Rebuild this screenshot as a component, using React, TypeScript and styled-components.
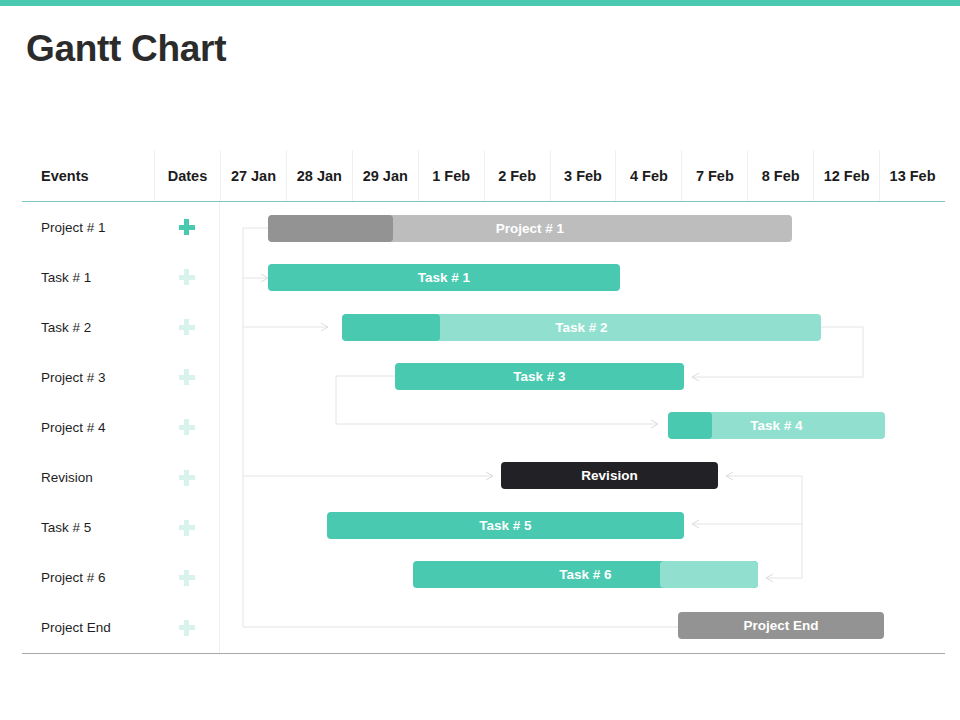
import React from "react";
import styled, { createGlobalStyle } from "styled-components";

const Global = createGlobalStyle`
  html, body { margin: 0; padding: 0; background: #fff; }
  body { font-family: "Liberation Sans", Arial, sans-serif; }
`;

const Page = styled.div`
  width: 960px; height: 720px; position: relative; overflow: hidden;
  border-top: 6px solid #48c9b0; box-sizing: border-box;
`;
const Title = styled.h1`
  margin: 0; padding: 22px 0 0 26px; font-size: 37px; font-weight: 700;
  color: #2b2b2b; line-height: 42px; letter-spacing: -0.3px;
`;
const Table = styled.div`
  margin: 80px 0 0 22px; width: 923px;
`;
const Header = styled.div`
  display: grid; grid-template-columns: 132px 66px repeat(11, 1fr);
  height: 51px; border-bottom: 1px solid #7cc5c6;
`;
const HeadCell = styled.div<{ $first?: boolean }>`
  display: flex; align-items: center; justify-content: ${p => (p.$first ? "flex-start" : "center")};
  padding-left: ${p => (p.$first ? "19px" : "0")};
  font-size: 14.5px; font-weight: 700; color: #1c1c1c;
  border-left: ${p => (p.$first ? "none" : "1px solid #f0f0f0")};
`;
const Body = styled.div`
  display: grid; grid-template-columns: 132px 66px 1fr;
  height: 451px; border-bottom: 1px solid #a8a8a8;
`;
const Col = styled.div<{ $divider?: boolean }>`
  display: grid; grid-template-rows: repeat(9, 1fr);
  border-right: ${p => (p.$divider ? "1px solid #f0f0f0" : "none")};
`;
const Label = styled.div`
  display: flex; align-items: center; padding-left: 19px; font-size: 13.5px; color: #1e1e1e;
`;
const PlusCell = styled.div`
  display: flex; align-items: center; justify-content: center;
`;
const Plus = styled.span<{ $active?: boolean }>`
  position: relative; width: 16px; height: 16px; display: block;
  &::before, &::after { content: ""; position: absolute; background: ${p => (p.$active ? "#48c9b0" : "#d8f3ed")}; }
  &::before { left: 0; right: 0; top: 5.5px; height: 5px; }
  &::after { top: 0; bottom: 0; left: 5.5px; width: 5px; }
`;
const Chart = styled.div`position: relative;`;
const Svg = styled.svg`position: absolute; inset: 0;`;
const Bar = styled.div<{ $bg: string }>`
  position: absolute; height: 27px; border-radius: 4px; overflow: hidden;
  background: ${p => p.$bg}; display: flex; align-items: center; justify-content: center;
`;
const BarFill = styled.div<{ $bg: string }>`
  position: absolute; top: 0; bottom: 0; background: ${p => p.$bg}; border-radius: 4px;
`;
const BarText = styled.span`
  position: relative; color: #fff; font-weight: 700; font-size: 13.5px;
`;

const T = "#48c9b0", TL = "#90dfcf", G = "#939393", GL = "#bdbdbd";
const OX = 220, OY = 201;
type B = { l: string; x1: number; x2: number; y: number; bg: string; fill?: [number, number, string] };
const bars: B[] = [
  { l: "Project # 1", x1: 268, x2: 792, y: 214, bg: GL, fill: [268, 393, G] },
  { l: "Task # 1", x1: 268, x2: 620, y: 263, bg: T },
  { l: "Task # 2", x1: 342, x2: 821, y: 313, bg: TL, fill: [342, 440, T] },
  { l: "Task # 3", x1: 395, x2: 684, y: 362, bg: T },
  { l: "Task # 4", x1: 668, x2: 885, y: 411, bg: TL, fill: [668, 712, T] },
  { l: "Revision", x1: 501, x2: 718, y: 461, bg: "#222226" },
  { l: "Task # 5", x1: 327, x2: 684, y: 511, bg: T },
  { l: "Task # 6", x1: 413, x2: 758, y: 560, bg: T, fill: [660, 758, TL] },
  { l: "Project End", x1: 678, x2: 884, y: 611, bg: G },
];
const events = ["Project # 1", "Task # 1", "Task # 2", "Project # 3", "Project # 4", "Revision", "Task # 5", "Project # 6", "Project End"];
const dates = ["27 Jan", "28 Jan", "29 Jan", "1 Feb", "2 Feb", "3 Feb", "4 Feb", "7 Feb", "8 Feb", "12 Feb", "13 Feb"];

const p = (pts: number[][]) => pts.map(([x, y]) => `${x - OX},${y - OY}`).join(" ");
const arrow = (x: number, y: number, dir: 1 | -1) => p([[x - 7 * dir, y - 4], [x, y], [x - 7 * dir, y + 4]]);

export default function App() {
  const lines = [
    [[268, 227], [243, 227], [243, 626], [678, 626]],
    [[243, 277], [268, 277]],
    [[243, 326], [328, 326]],
    [[243, 475], [493, 475]],
    [[821, 326], [863, 326], [863, 376], [692, 376]],
    [[395, 375], [336, 375], [336, 423], [658, 423]],
    [[726, 475], [802, 475], [802, 577], [766, 577]],
    [[802, 523], [692, 523]],
  ];
  const arrows: [number, number, 1 | -1][] = [
    [268, 277, 1], [328, 326, 1], [493, 475, 1], [692, 376, -1], [658, 423, 1], [726, 475, -1], [692, 523, -1], [766, 577, -1],
  ];
  return (
    <Page>
      <Global />
      <Title>Gantt Chart</Title>
      <Table>
        <Header>
          <HeadCell $first>Events</HeadCell>
          <HeadCell>Dates</HeadCell>
          {dates.map(d => <HeadCell key={d}>{d}</HeadCell>)}
        </Header>
        <Body>
          <Col>{events.map(e => <Label key={e}>{e}</Label>)}</Col>
          <Col $divider>{events.map((e, i) => <PlusCell key={e}><Plus $active={i === 0} /></PlusCell>)}</Col>
          <Chart>
            <Svg width="725" height="451">
              {lines.map((l, i) => <polyline key={i} points={p(l)} fill="none" stroke="#e4e4e4" strokeWidth="1" />)}
              {arrows.map(([x, y, d], i) => <polyline key={i} points={arrow(x, y, d)} fill="none" stroke="#dcdcdc" strokeWidth="1" />)}
            </Svg>
            {bars.map(b => (
              <Bar key={b.l} $bg={b.bg} style={{ left: b.x1 - OX, width: b.x2 - b.x1, top: b.y - OY }}>
                {b.fill && <BarFill $bg={b.fill[2]} style={{ left: b.fill[0] - b.x1, width: b.fill[1] - b.fill[0] }} />}
                <BarText>{b.l}</BarText>
              </Bar>
            ))}
          </Chart>
        </Body>
      </Table>
    </Page>
  );
}
